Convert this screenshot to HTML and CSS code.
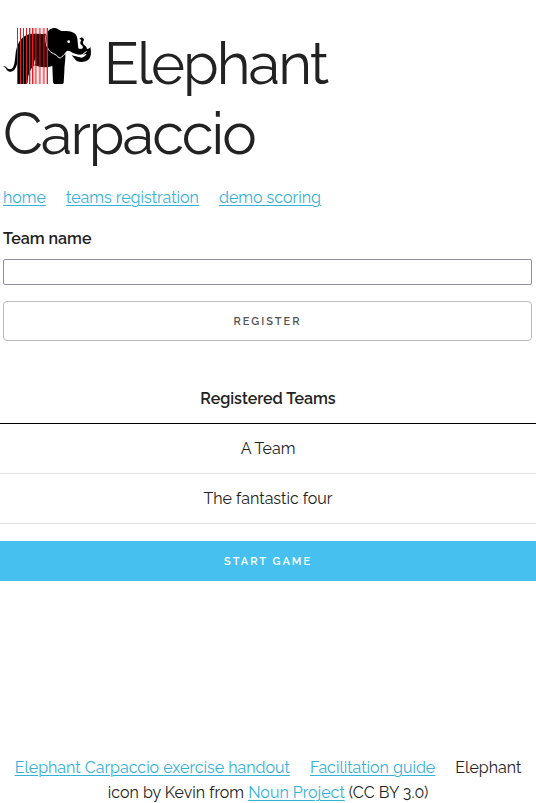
FILE: index.html
```html
<!DOCTYPE html>
<html lang="en">
<head>
<meta charset="utf-8">
<meta name="viewport" content="width=device-width, initial-scale=1">
<title>Elephant Carpaccio</title>
<link rel="stylesheet" href="styles.css">
</head>
<body>
<header class="header">
<h1 class="title"><svg class="logo" viewBox="9 24 264 168" aria-hidden="true">
<path d="M9 138C19 137 21 147 29 148C42 149 44 130 46 108C49 72 63 49 87 43C104 39 123 44 138 41C143 33 150 25 162 24C172 23 177 33 188 33C204 33 220 34 228 44C235 54 232 75 236 86L262 87C267 86 269 84 271 81C275 98 273 113 263 121C249 129 230 127 224 116L215 106L245 113C252 111 257 106 260 101C242 107 225 104 210 94C202 89 195 94 196 104C197 119 193 136 193 155L191 188Q191 192 185 192H162L159 187L157 137C141 145 121 142 103 136C93 145 84 159 83 187L80 192H55L52 187L51 132C47 148 39 157 29 155C18 153 20 143 9 138Z"/>
<path d="M238 57C242 51 249 51 251 57C254 62 247 64 249 69C251 77 261 78 261 87L258 94C249 99 232 99 218 93L239 91C247 88 251 83 248 79C244 74 239 72 241 66C243 62 246 59 238 57Z"/>
<path class="ear" d="M146 27C137 39 136 55 139 71C142 91 153 98 165 103C173 107 175 114 181 114C186 110 193 105 197 98"/>
<path class="tusk" d="M216 101C225 107 239 109 247 104L260 94"/>
<path class="belly" d="M106 117V131L101 137L103 123Z"/>
<circle class="eye" cx="206" cy="65" r="4"/>
<path class="slices" d="M52.500 24V192M61.500 24V192M70.500 24V192M79.500 24V192M88.500 24V192M97.500 24V192M108 24V192M120 24V192M132 24V192M142.500 24V192"/>
<path class="slices-soft" d="M91.500 24V192M100.500 24V192M105 24V192M117 24V192M129 24V192M139.500 24V192"/>
</svg> Elephant Carpaccio</h1>
<nav class="nav">
<a class="link" href="#home">home</a>
<a class="link" href="#teams">teams registration</a>
<a class="link" href="#scoring">demo scoring</a>
</nav>
</header>
<main class="main">
<form class="form">
<label class="label" for="team">Team name</label>
<input class="field" id="team" name="team" type="text">
<button class="button" type="submit">Register</button>
</form>
<table class="teams">
<thead><tr><th>Registered Teams</th></tr></thead>
<tbody>
<tr><td>A Team</td></tr>
<tr><td>The fantastic four</td></tr>
</tbody>
</table>
<button class="button button-primary" type="button">Start game</button>
</main>
<footer class="footer">
<a class="link footer-link" href="#handout">Elephant Carpaccio exercise handout</a>
<a class="link footer-link" href="#guide">Facilitation guide</a>
Elephant icon by Kevin from <a class="link" href="#noun">Noun Project</a> (CC BY 3.0)
</footer>
</body>
</html>
```
FILE: styles.css
```css
* {
  box-sizing: border-box;
}

body {
  margin: 0;
  min-height: 100vh;
  display: flex;
  flex-direction: column;
  background: #fff;
  color: #222;
  font-family: Raleway, Lato, sans-serif;
  font-size: 16px;
  line-height: 25px;
}

.header {
  padding: 28px 4px 0 3px;
}

.title {
  margin: 0 0 16px;
  font-size: 58px;
  font-weight: 400;
  letter-spacing: -2px;
  line-height: 70px;
}

.logo {
  width: 88px;
  height: 56px;
}

.ear,
.tusk {
  fill: none;
  stroke: #fff;
  stroke-width: 3;
}

.belly,
.eye {
  fill: #fff;
}

.slices {
  fill: none;
  stroke: #f01820;
  stroke-width: 3;
}

.slices-soft {
  fill: none;
  stroke: #f01820;
  stroke-opacity: 0.4;
  stroke-width: 3;
}

.nav {
  display: flex;
  flex-wrap: wrap;
  gap: 20px;
}

.link {
  color: #33b1d9;
  text-decoration: underline;
  text-decoration-thickness: 1px;
  text-underline-offset: 2px;
}

.form {
  display: flex;
  flex-direction: column;
  padding: 16px 4px 0 3px;
}

.label {
  margin-bottom: 8px;
  font-weight: 600;
}

.field {
  height: 26px;
  margin: 0 0 16px;
  padding: 0 8px;
  border: 1px solid #8f8f9d;
  border-radius: 2px;
  background: #fff;
  font: inherit;
}

.button {
  width: 100%;
  height: 40px;
  padding: 0 30px;
  border: 1px solid #bbb;
  border-radius: 4px;
  background: transparent;
  color: #555;
  font-family: inherit;
  font-size: 11px;
  font-weight: 600;
  letter-spacing: 2px;
  text-transform: uppercase;
}

.teams {
  width: 100%;
  margin: 32px 0 17px;
  border-collapse: collapse;
  text-align: center;
}

.teams th,
.teams td {
  padding: 12px 16px;
  border-bottom: 1px solid #e1e1e1;
}

.teams th {
  padding-top: 13px;
  border-bottom-color: #000;
  font-weight: 600;
}

.button-primary {
  display: block;
  border: 0;
  border-radius: 0;
  background: #46c1ef;
  color: #fff;
}

.footer {
  margin: auto 0 -2px;
  padding: 0 4px;
  text-align: center;
}

.footer-link {
  margin-right: 16px;
}
```
